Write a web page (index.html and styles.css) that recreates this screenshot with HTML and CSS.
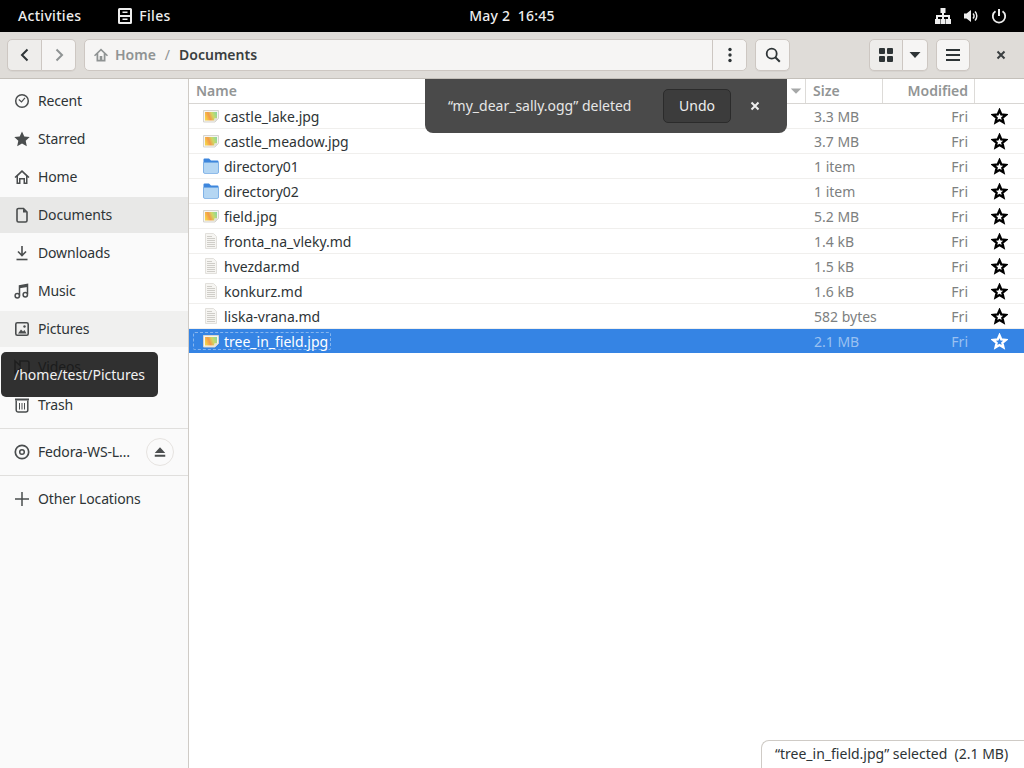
FILE: index.html
```html
<!DOCTYPE html>
<html lang="en">
<head>
    <meta charset="UTF-8">
    <meta name="viewport" content="width=device-width, initial-scale=1.0">
    <title>Documents - Files</title>
    <link rel="stylesheet" href="styles.css">
</head>
<body>
    <!-- shared icons -->
    <svg class="sprite" width="0" height="0">
        <defs>
            <linearGradient id="photo" x1="0" y1="0.6" x2="1" y2="0.3">
                <stop offset="0" stop-color="#f6d348"/>
                <stop offset="0.35" stop-color="#f49a4a"/>
                <stop offset="0.65" stop-color="#cfd864"/>
                <stop offset="1" stop-color="#8fd89a"/>
            </linearGradient>
        </defs>
        <symbol id="i-image" viewBox="0 0 16 16">
            <path d="M0.500 2.500h15v8l-3.500 3.500H0.500z" fill="#f6f5f2" stroke="#d6d4cf"/>
            <path d="M2 4h12v6.500h-2.500V12.500H2z" fill="url(#photo)"/>
            <path d="M11.500 14v-3.500H15.500z" fill="#e2e0db"/>
        </symbol>
        <symbol id="i-folder" viewBox="0 0 16 16">
            <path d="M0.500 1.500a1 1 0 0 1 1-1h4.500l2 2h6.500a1 1 0 0 1 1 1v10.500a1 1 0 0 1-1 1h-13a1 1 0 0 1-1-1z" fill="#3d86dd"/>
            <path d="M0.500 4.500h15v9.500a1.500 1.500 0 0 1-1.500 1.500h-12a1.500 1.500 0 0 1-1.500-1.500z" fill="#b4d6f3" stroke="#6ea6e2" stroke-width="0.700"/>
        </symbol>
        <symbol id="i-text" viewBox="0 0 16 16">
            <path d="M2.500 0.500h8l3 3v12h-11z" fill="#f6f5f2" stroke="#e2e0dc"/>
            <path d="M4 3.500h5M4 5.500h8M4 7.500h8M4 9.500h8M4 11.500h8M4 13.500h8" stroke="#cfcdc8" stroke-width="1"/>
        </symbol>
        <symbol id="i-star" viewBox="0 0 16 16">
            <path d="M8 2.200l1.700 3.900 4.300 0.400-3.300 2.800 1 4.200L8 11.300l-3.700 2.200 1-4.200L2 6.500l4.300-0.400z" fill="none" stroke="currentColor" stroke-width="2.200" stroke-linejoin="miter"/>
        </symbol>
        <symbol id="i-close" viewBox="0 0 16 16">
            <path d="M4.500 4.500l7 7M11.500 4.500l-7 7" stroke="currentColor" stroke-width="2" fill="none"/>
        </symbol>
    </svg>

    <div class="topbar">
        <div class="top-left">
            <span class="top-label">Activities</span>
            <span class="top-app">
                <svg class="top-icon" viewBox="0 0 14 16">
                    <path d="M1.500 0h11A1.500 1.500 0 0 1 14 1.500v13a1.500 1.500 0 0 1-1.500 1.500h-11A1.500 1.500 0 0 1 0 14.500v-13A1.500 1.500 0 0 1 1.500 0zM2 2v5h10V2zM2 9v5h10V9zM4.500 3.500h5V5h-5zM4.500 10.500h5V12h-5z" fill="#eee" fill-rule="evenodd"/>
                </svg>
                <span class="top-label">Files</span>
            </span>
        </div>
        <div class="top-clock">May 2&nbsp; 16:45</div>
        <div class="top-right">
            <svg class="tray" viewBox="0 0 16 16"><path d="M5.500 0h5v5H9v2h6v4h1v5h-5v-5h2V9H9v2h1.500v5h-5v-5H7V9H3v2h2v5H0v-5h1V7h6V5H5.500z" fill="#eee"/></svg>
            <svg class="tray" viewBox="0 0 16 16"><path d="M1 5.500h2.500L8 2v12l-4.500-3.500H1z" fill="#eee"/><path d="M10 5.500a3.500 3.500 0 0 1 0 5M12 3.500a6.500 6.500 0 0 1 0 9" fill="none" stroke="#eee" stroke-width="1.500"/></svg>
            <svg class="tray" viewBox="0 0 16 16"><path d="M8 1v7" stroke="#eee" stroke-width="2" fill="none"/><path d="M4.500 3.300a6.200 6.200 0 1 0 7 0" stroke="#eee" stroke-width="1.800" fill="none"/></svg>
        </div>
    </div>

    <div class="headerbar">
        <div class="btn-group">
            <button class="btn btn-nav btn-back active">
                <svg class="icon" viewBox="0 0 16 16"><path d="M10.500 2.500L5 8l5.500 5.500" fill="none" stroke="#2e3436" stroke-width="2"/></svg>
            </button>
            <button class="btn btn-nav">
                <svg class="icon" viewBox="0 0 16 16"><path d="M5.500 2.500L11 8l-5.500 5.500" fill="none" stroke="#8f9393" stroke-width="2"/></svg>
            </button>
        </div>
        <div class="pathbar">
            <div class="path-crumbs">
                <svg class="icon home-crumb" viewBox="0 0 16 16"><path d="M8 1.500L1 8.200l1 1 1.500-1.300V14.500h9V7.900L14 9.200l1-1zM5.300 12.800V6.300L8 3.800l2.700 2.500v6.500H9.300V9H6.700v3.800z" fill="#8f9393" fill-rule="evenodd"/></svg>
                <span class="crumb-dim">Home</span>
                <span class="crumb-sep">/</span>
                <span class="crumb-now">Documents</span>
            </div>
            <button class="btn btn-path-menu">
                <svg class="icon" viewBox="0 0 16 16"><circle cx="8" cy="2.500" r="1.700" fill="#2e3436"/><circle cx="8" cy="8" r="1.700" fill="#2e3436"/><circle cx="8" cy="13.500" r="1.700" fill="#2e3436"/></svg>
            </button>
        </div>
        <button class="btn btn-search">
            <svg class="icon" viewBox="0 0 16 16"><circle cx="6.700" cy="6.700" r="5" fill="none" stroke="#2e3436" stroke-width="1.800"/><path d="M10.300 10.300l4.500 4.500" stroke="#2e3436" stroke-width="2"/></svg>
        </button>
        <div class="btn-group view-group">
            <button class="btn btn-view active">
                <svg class="icon" viewBox="0 0 16 16"><rect x="1" y="1" width="6" height="6" rx="1" fill="#2e3436"/><rect x="9" y="1" width="6" height="6" rx="1" fill="#2e3436"/><rect x="1" y="9" width="6" height="6" rx="1" fill="#2e3436"/><rect x="9" y="9" width="6" height="6" rx="1" fill="#2e3436"/></svg>
            </button>
            <button class="btn btn-caret">
                <svg class="icon" viewBox="0 0 16 16"><path d="M2.500 5h11L8 11z" fill="#2e3436"/></svg>
            </button>
        </div>
        <button class="btn btn-menu">
            <svg class="icon" viewBox="0 0 16 16"><path d="M1 3h14M1 8h14M1 13h14" stroke="#2e3436" stroke-width="2"/></svg>
        </button>
        <div class="window-close">
            <svg class="icon close-win"><use href="#i-close"/></svg>
        </div>
    </div>

    <div class="main">
        <nav class="sidebar">
            <div class="place">
                <svg class="icon" viewBox="0 0 16 16"><circle cx="8" cy="8" r="6.300" fill="none" stroke="#4a4d4e" stroke-width="1.500"/><path d="M4.800 6.500L7.500 9 11 4.800" fill="none" stroke="#4a4d4e" stroke-width="1.200"/></svg>
                <span>Recent</span>
            </div>
            <div class="place">
                <svg class="icon" viewBox="0 0 16 16"><path d="M8 .5l2.300 5 5.400.6-4 3.700 1.100 5.400L8 12.500l-4.800 2.700 1.100-5.400-4-3.700 5.400-.6z" fill="#4a4d4e"/></svg>
                <span>Starred</span>
            </div>
            <div class="place">
                <svg class="icon" viewBox="0 0 16 16"><path d="M8 1L.5 8l1 1.100L2.500 8.200V15h4v-4.500h3V15h4V8.200l1 .9 1-1.100zM4 13.500V7L8 3.200 12 7v6.500h-1V9H5v4.500z" fill="#4a4d4e" fill-rule="evenodd"/></svg>
                <span>Home</span>
            </div>
            <div class="place selected">
                <svg class="icon" viewBox="0 0 16 16"><path d="M3 3a1.500 1.500 0 0 1 1.500-1.500h5L13 5v8.500a1.500 1.500 0 0 1-1.500 1.500h-7A1.500 1.500 0 0 1 3 13.500z" fill="none" stroke="#4a4d4e" stroke-width="1.600"/><path d="M9 1.500V5.500h4" fill="#4a4d4e"/></svg>
                <span>Documents</span>
            </div>
            <div class="place">
                <svg class="icon" viewBox="0 0 16 16"><path d="M8 1v9M4 6.500L8 10.500l4-4" fill="none" stroke="#4a4d4e" stroke-width="1.600"/><path d="M2.500 14.500h11" stroke="#4a4d4e" stroke-width="1.600"/></svg>
                <span>Downloads</span>
            </div>
            <div class="place">
                <svg class="icon" viewBox="0 0 16 16"><path d="M5.500 12.500V2.800l8-1.300v9.500" fill="none" stroke="#4a4d4e" stroke-width="1.500"/><path d="M5.500 3l8-1.500V4l-8 1.300z" fill="#4a4d4e"/><circle cx="3.300" cy="12.700" r="2.200" fill="none" stroke="#4a4d4e" stroke-width="1.500"/><circle cx="11.300" cy="11.700" r="2.200" fill="none" stroke="#4a4d4e" stroke-width="1.500"/></svg>
                <span>Music</span>
            </div>
            <div class="place hover">
                <svg class="icon" viewBox="0 0 16 16"><rect x="1.800" y="1.800" width="12.400" height="12.400" rx="1.500" fill="none" stroke="#4a4d4e" stroke-width="1.600"/><path d="M4 12.500l3-4 2 2 1.500-1.500 2 3.500z" fill="#4a4d4e"/><circle cx="10.500" cy="5.500" r="1.200" fill="#4a4d4e"/></svg>
                <span>Pictures</span>
            </div>
            <div class="place">
                <svg class="icon" viewBox="0 0 16 16"><path d="M1 2l5 4.500V2h7a2 2 0 0 1 2 2v8a2 2 0 0 1-2 2H6V9.500L1 14z" fill="none" stroke="#4a4d4e" stroke-width="1.600"/></svg>
                <span>Videos</span>
            </div>
            <div class="place">
                <svg class="icon" viewBox="0 0 16 16"><path d="M1 1.500h14v2H1z" fill="#4a4d4e"/><path d="M2.200 3.500V13a2 2 0 0 0 2 2h7.600a2 2 0 0 0 2-2V3.500" fill="none" stroke="#4a4d4e" stroke-width="1.500"/><path d="M5.500 6v6.500M8 6v6.500M10.500 6v6.500" stroke="#4a4d4e" stroke-width="1"/></svg>
                <span>Trash</span>
            </div>
            <div class="side-sep"></div>
            <div class="place">
                <svg class="icon" viewBox="0 0 16 16"><circle cx="8" cy="8" r="6.700" fill="none" stroke="#4a4d4e" stroke-width="1.700"/><circle cx="8" cy="8" r="2.300" fill="none" stroke="#4a4d4e" stroke-width="1.500"/></svg>
                <span>Fedora-WS-L…</span>
                <div class="eject">
                    <svg class="icon" viewBox="0 0 16 16"><path d="M8 2.500l6 6.500H2zM2 11h12v2.500H2z" fill="#4a4d4e"/></svg>
                </div>
            </div>
            <div class="side-sep"></div>
            <div class="place">
                <svg class="icon" viewBox="0 0 16 16"><path d="M8 1v14M1 8h14" stroke="#4a4d4e" stroke-width="1.500"/></svg>
                <span>Other Locations</span>
            </div>
        </nav>

        <section class="content">
            <div class="list-head">
                <div class="col-title name-head"><span>Name</span>
                    <svg class="sort" viewBox="0 0 16 16"><path d="M2 5h12L8 11z" fill="#a6a8a8"/></svg>
                </div>
                <div class="col-title size-head"><span>Size</span></div>
                <div class="col-title mod-head"><span>Modified</span></div>
                <div class="col-title star-head"></div>
            </div>

            <div class="row"><div class="name"><svg class="file-icon"><use href="#i-image"/></svg><span class="label">castle_lake.jpg</span></div><div class="size">3.3 MB</div><div class="mod">Fri</div><svg class="star"><use href="#i-star"/></svg></div>
            <div class="row"><div class="name"><svg class="file-icon"><use href="#i-image"/></svg><span class="label">castle_meadow.jpg</span></div><div class="size">3.7 MB</div><div class="mod">Fri</div><svg class="star"><use href="#i-star"/></svg></div>
            <div class="row"><div class="name"><svg class="file-icon"><use href="#i-folder"/></svg><span class="label">directory01</span></div><div class="size">1 item</div><div class="mod">Fri</div><svg class="star"><use href="#i-star"/></svg></div>
            <div class="row"><div class="name"><svg class="file-icon"><use href="#i-folder"/></svg><span class="label">directory02</span></div><div class="size">1 item</div><div class="mod">Fri</div><svg class="star"><use href="#i-star"/></svg></div>
            <div class="row"><div class="name"><svg class="file-icon"><use href="#i-image"/></svg><span class="label">field.jpg</span></div><div class="size">5.2 MB</div><div class="mod">Fri</div><svg class="star"><use href="#i-star"/></svg></div>
            <div class="row"><div class="name"><svg class="file-icon"><use href="#i-text"/></svg><span class="label">fronta_na_vleky.md</span></div><div class="size">1.4 kB</div><div class="mod">Fri</div><svg class="star"><use href="#i-star"/></svg></div>
            <div class="row"><div class="name"><svg class="file-icon"><use href="#i-text"/></svg><span class="label">hvezdar.md</span></div><div class="size">1.5 kB</div><div class="mod">Fri</div><svg class="star"><use href="#i-star"/></svg></div>
            <div class="row"><div class="name"><svg class="file-icon"><use href="#i-text"/></svg><span class="label">konkurz.md</span></div><div class="size">1.6 kB</div><div class="mod">Fri</div><svg class="star"><use href="#i-star"/></svg></div>
            <div class="row"><div class="name"><svg class="file-icon"><use href="#i-text"/></svg><span class="label">liska-vrana.md</span></div><div class="size">582 bytes</div><div class="mod">Fri</div><svg class="star"><use href="#i-star"/></svg></div>
            <div class="row row-selected"><div class="name"><div class="focus-box"><svg class="file-icon"><use href="#i-image"/></svg><span class="label">tree_in_field.jpg</span></div></div><div class="size">2.1 MB</div><div class="mod">Fri</div><svg class="star"><use href="#i-star"/></svg></div>

            <div class="toast">
                <span class="toast-text">“my_dear_sally.ogg” deleted</span>
                <button class="toast-undo">Undo</button>
                <svg class="toast-close"><use href="#i-close"/></svg>
            </div>

            <div class="status">“tree_in_field.jpg” selected&nbsp; (2.1 MB)</div>
        </section>

        <div class="tooltip">/home/test/Pictures</div>
    </div>
</body>
</html>
```

FILE: styles.css
```css
* {
    box-sizing: border-box;
}
body {
    font-family: "Noto Sans", sans-serif;
    font-size: 14px;
    margin: 0;
    padding: 0;
    width: 1024px;
    height: 768px;
    overflow: hidden;
    color: #2e3436;
    background: #fff;
}
.sprite {
    position: absolute;
}
.icon {
    width: 16px;
    height: 16px;
    flex: none;
}

/* shell top bar */
.topbar {
    height: 32px;
    padding-bottom: 1px;
    background: #000;
    color: #eee;
    display: grid;
    grid-template-columns: 1fr auto 1fr;
    align-items: center;
    font-weight: 500;
}
.top-left {
    display: flex;
    align-items: center;
    padding-left: 18px;
    gap: 37px;
}
.top-label {
    letter-spacing: 0.3px;
}
.top-app {
    display: flex;
    align-items: center;
    gap: 7px;
}
.top-icon {
    width: 14px;
    height: 16px;
}
.top-clock {
    letter-spacing: 0.2px;
}
.top-right {
    display: flex;
    justify-content: flex-end;
    gap: 12px;
    padding-right: 17px;
}
.tray {
    width: 16px;
    height: 16px;
}

/* window header */
.headerbar {
    height: 47px;
    background: #dfdcd8;
    border-bottom: 1px solid #c4c0ba;
    display: flex;
    align-items: flex-start;
    padding: 7px 0 0 7px;
}
.btn {
    height: 32px;
    border: 1px solid #cdc7c2;
    border-radius: 5px;
    background: #f6f5f4;
    padding: 0;
    display: flex;
    align-items: center;
    justify-content: center;
    box-shadow: 0 1px 0 rgba(0, 0, 0, 0.04);
}
.btn-group {
    display: flex;
}
.btn-group .btn:first-child {
    border-radius: 5px 0 0 5px;
}
.btn-group .btn:last-child {
    border-radius: 0 5px 5px 0;
    border-left: 0;
}
.btn.active {
    background: #eeedeb;
}
.btn-nav {
    width: 34px;
}
.btn-back {
    width: 35px;
}
.pathbar {
    width: 663px;
    height: 32px;
    margin-left: 8px;
    display: flex;
    background: #f6f5f4;
    border: 1px solid #cdc7c2;
    border-radius: 5px;
}
.path-crumbs {
    flex: 1;
    display: flex;
    align-items: center;
    padding: 0 0 2px 8px;
}
.home-crumb {
    margin: 2px 6px 0 0;
}
.crumb-dim {
    color: #8f9393;
    font-weight: 600;
}
.crumb-sep {
    color: #8f9393;
    margin: 0 9px;
}
.crumb-now {
    font-weight: 600;
    color: #3a3e40;
}
.btn-path-menu {
    width: 34px;
    height: 30px;
    border-width: 0 0 0 1px;
    border-radius: 0 5px 5px 0;
    box-shadow: none;
}
.btn-search {
    width: 35px;
    margin-left: 8px;
}
.view-group {
    margin-left: 79px;
}
.btn-view {
    width: 34px;
}
.btn-caret {
    width: 25px;
}
.btn-menu {
    width: 34px;
    margin-left: 8px;
}
.window-close {
    width: 54px;
    height: 32px;
    padding-left: 8px;
    display: flex;
    align-items: center;
    justify-content: center;
    color: #3a3e40;
}

/* body */
.main {
    position: relative;
    height: 689px;
    display: flex;
}
.sidebar {
    width: 189px;
    flex: none;
    background: #fafafa;
    border-right: 1px solid #cfcbc6;
    padding-top: 4px;
    letter-spacing: -0.15px;
}
.place {
    height: 36px;
    margin-bottom: 2px;
    display: flex;
    align-items: center;
    padding-left: 14px;
    gap: 8px;
}
.place span {
    padding-bottom: 2px;
}
.place.selected {
    background: #e8e8e7;
}
.place.hover {
    background: #f0f0ef;
}
.side-sep {
    height: 1px;
    margin: 5px 0;
    background: #e0dfdd;
}
.eject {
    width: 28px;
    height: 28px;
    margin: 0 14px 0 auto;
    border: 1px solid #e6e3e0;
    border-radius: 50%;
    display: flex;
    align-items: center;
    justify-content: center;
}
.eject .icon {
    width: 14px;
    height: 14px;
}
.tooltip {
    position: absolute;
    left: 1px;
    top: 273px;
    width: 157px;
    height: 45px;
    padding: 0 0 1px 13px;
    display: flex;
    align-items: center;
    background: rgba(25, 25, 25, 0.9);
    border-radius: 5px;
    color: #f2f2f2;
}

/* file list */
.content {
    position: relative;
    flex: 1;
    background: #fff;
}
.list-head {
    height: 25px;
    display: grid;
    grid-template-columns: 617px 77px 92px 49px;
    border-bottom: 1px solid #d8d6d3;
}
.col-title {
    display: flex;
    align-items: center;
    color: #929595;
    font-weight: 600;
    padding: 0 7px;
    border-right: 1px solid #dddbd8;
}
.col-title span {
    padding-bottom: 2px;
}
.name-head {
    justify-content: space-between;
    padding-left: 7px;
    padding-right: 2px;
}
.sort {
    width: 14px;
    height: 14px;
}
.mod-head {
    justify-content: flex-end;
    padding-right: 6px;
}
.star-head {
    border-right: 0;
}
.row {
    height: 25px;
    display: grid;
    grid-template-columns: 617px 77px 92px 49px;
    align-items: center;
    border-bottom: 1px solid #f0efed;
}
.name {
    display: flex;
    align-items: center;
    padding-left: 14px;
}
.file-icon {
    width: 16px;
    height: 16px;
    margin-right: 5px;
    flex: none;
}
.size {
    padding-left: 8px;
    color: #7d8080;
}
.mod {
    padding-right: 7px;
    text-align: right;
    color: #7d8080;
}
.star {
    width: 17px;
    height: 17px;
    justify-self: center;
    color: #000;
}
.row-selected {
    height: 24px;
    border-bottom: 0;
    background: #3584e4;
    color: #fff;
}
.row-selected .size,
.row-selected .mod {
    color: #9ac1f1;
}
.row-selected .star {
    color: #fff;
}
.focus-box {
    display: flex;
    align-items: center;
    height: 18px;
    margin-left: -10px;
    padding: 0 2px 0 9px;
    border: 1px dashed #86b5ee;
    border-radius: 2px;
}

/* overlays */
.toast {
    position: absolute;
    left: 236px;
    top: 0;
    width: 362px;
    height: 54px;
    background: #4a4a4a;
    border-radius: 0 0 8px 8px;
    display: flex;
    align-items: center;
    padding-left: 23px;
    color: #e6e6e6;
}
.toast-text {
    width: 215px;
    padding-bottom: 2px;
}
.toast-undo {
    width: 68px;
    height: 34px;
    padding: 0 0 2px;
    background: #3c3c3c;
    border: 1px solid #2b2b2b;
    border-radius: 5px;
    color: #eee;
    font: inherit;
}
.toast-close {
    width: 16px;
    height: 16px;
    margin-left: 16px;
    color: #eee;
}
.status {
    position: absolute;
    right: 0;
    bottom: 0;
    width: 263px;
    height: 28px;
    padding: 3px 0 0 13px;
    background: #fff;
    border: 1px solid #cfcbc6;
    border-width: 1px 0 0 1px;
    border-top-left-radius: 8px;
    white-space: nowrap;
}
```
